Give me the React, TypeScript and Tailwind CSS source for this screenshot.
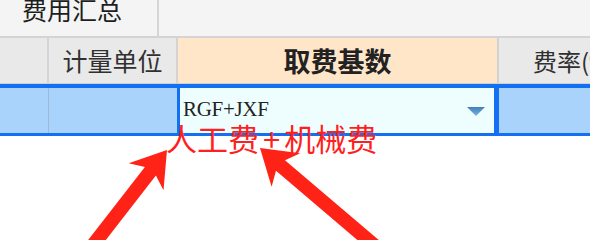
import React from 'react';

// Annotated screenshot of a fee summary grid: header row, one selected row,
// red callout text + two arrows pointing at the cell value.

const cjk = "font-['Microsoft_YaHei','Noto_Sans_CJK_SC',sans-serif]";

function Arrow({ points }: { points: string }) {
    return <polygon points={points} fill="#ff2317" />;
}

export default function App() {
    return (
        <div className={`relative w-[590px] h-[240px] overflow-hidden bg-white ${cjk}`}>
            {/* tab strip */}
            <div className="flex h-[38px] bg-[#f4f4f4] border-b-2 border-[#d4d4d4]">
                <div className="w-[159px] flex overflow-hidden border-r-2 border-[#d6d6d6] pl-[22px]">
                    <span className="text-[25px] leading-[25px] -mt-[3px] text-[#1e1e1e] whitespace-nowrap">费用汇总</span>
                </div>
            </div>

            {/* header row */}
            <div className="flex h-[46px] bg-[#e9e9e9] border-b border-[#cfcfcf] leading-none">
                <div className="w-[49px] shrink-0 border-r-2 border-[#d4d4d4]"></div>
                <div className="w-[129px] shrink-0 flex items-center justify-center border-r-2 border-[#d4d4d4] text-[25px] text-[#303030]">
                    计量单位
                </div>
                <div className="w-[321px] shrink-0 flex items-center justify-center border-r-2 border-[#d2d2d2] bg-[#ffe6c9] text-[27px] font-bold text-[#222]">
                    取费基数
                </div>
                <div className="flex-1 flex items-center pl-[34px] whitespace-nowrap overflow-hidden text-[24px] text-[#303030]">
                    费率(%)
                </div>
            </div>

            {/* selected data row */}
            <div className="flex h-[52px] bg-[#a9d3fb] border-t-4 border-b-[3px] border-[#1470f2]">
                <div className="w-[49px] shrink-0 border-r border-[#9bb9d8]"></div>
                <div className="w-[128px] shrink-0"></div>
                <div className="w-[320px] shrink-0 flex items-center justify-between bg-[#eefeff] border-x-[3px] border-[#1470f2] pl-[3px] pr-[8px]">
                    <span className="font-['Liberation_Serif',serif] text-[21px] leading-none tracking-[-0.3px] text-[#222] pb-[2px]">
                        RGF+JXF
                    </span>
                    <svg width="20" height="11" viewBox="0 0 20 11" className="mt-[2px]">
                        <defs>
                            <linearGradient id="tri" x1="0" y1="0" x2="0" y2="1">
                                <stop offset="0" stopColor="#3f80b8" />
                                <stop offset="1" stopColor="#7ab4e0" />
                            </linearGradient>
                        </defs>
                        <polygon points="1,1 19,1 10,10" fill="url(#tri)" />
                    </svg>
                </div>
                <div className="flex-1 border-l-2 border-[#1470f2]"></div>
            </div>

            {/* red annotation */}
            <div className="absolute left-[166px] top-[122px] text-[31px] leading-[31px] text-[#ff1f1f] whitespace-nowrap">
                人工费<span className="mx-[4px]">+</span>机械费
            </div>
            <svg className="absolute inset-0 pointer-events-none" width="590" height="240" viewBox="0 0 590 240">
                <defs>
                    <filter id="soft">
                        <feGaussianBlur stdDeviation="0.5" />
                    </filter>
                </defs>
                <g filter="url(#soft)">
                    <Arrow points="167,150 163.5,190.3 155.9,175.6 92.7,256.9 81.7,248.3 144.9,167 128.7,163.3" />
                    <Arrow points="260,148 271.6,186.7 276,170.8 377.3,257 386.3,246.4 285,160.2 300.2,153.3" />
                </g>
            </svg>
        </div>
    );
}
